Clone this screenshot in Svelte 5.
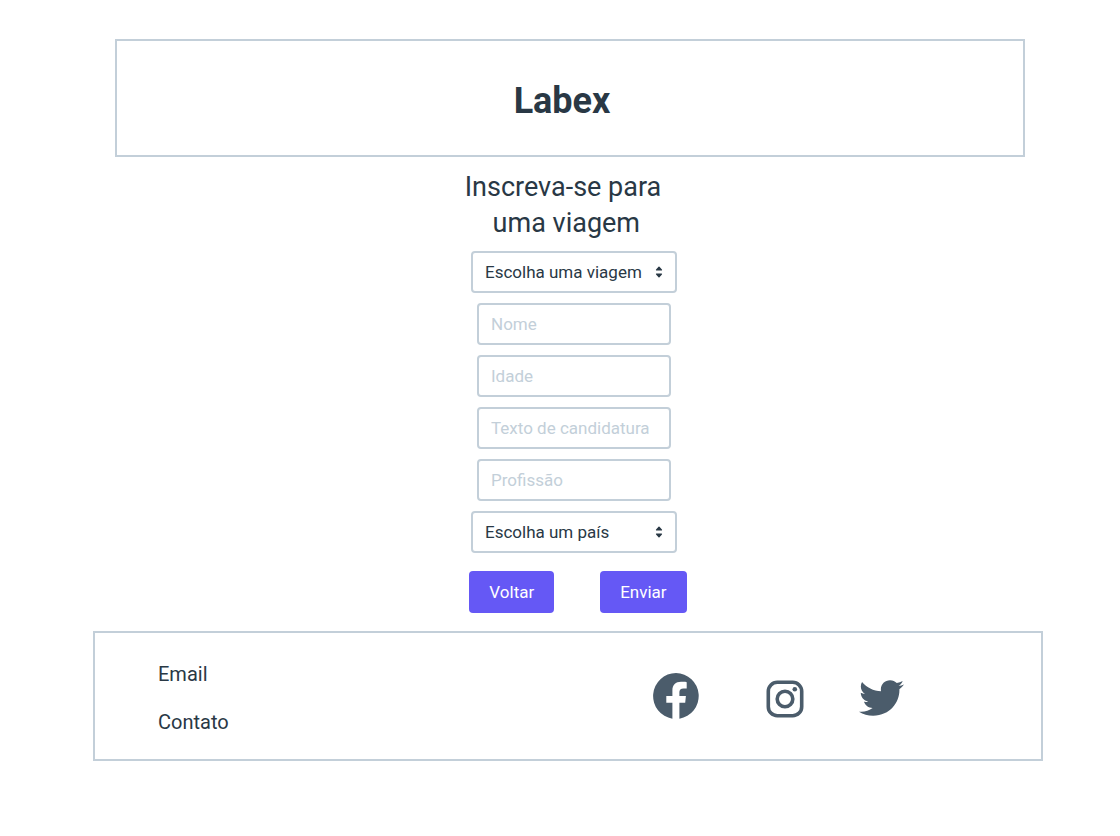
<script>
  const fields = [
    { name: 'nome', label: 'Nome' },
    { name: 'idade', label: 'Idade' },
    { name: 'candidatura', label: 'Texto de candidatura' },
    { name: 'profissao', label: 'Profissão' }
  ];
</script>

{#snippet choice(name, label)}
  <div class="choice">
    <select {name} aria-label={label}>
      <option value="">{label}</option>
    </select>
    <svg class="arrows" viewBox="0 0 8 12" aria-hidden="true">
      <path d="M1.5 4.5h5a.6.6 0 0 0 .45-1L4.5.8a.7.7 0 0 0-1 0L1.05 3.5a.6.6 0 0 0 .45 1zM1.5 7.5h5a.6.6 0 0 1 .45 1L4.5 11.2a.7.7 0 0 1-1 0L1.05 8.5a.6.6 0 0 1 .45-1z" />
    </svg>
  </div>
{/snippet}

<div class="page">
  <header>
    <h1>Labex</h1>
  </header>

  <main>
    <h2>Inscreva-se para<br />&nbsp;uma viagem</h2>
    <form onsubmit={(e) => e.preventDefault()}>
      {@render choice('viagem', 'Escolha uma viagem')}
      {#each fields as field}
        <input type="text" name={field.name} placeholder={field.label} aria-label={field.label} />
      {/each}
      {@render choice('pais', 'Escolha um país')}
      <div class="actions">
        <button type="button">Voltar</button>
        <button type="submit">Enviar</button>
      </div>
    </form>
  </main>

  <footer>
    <nav class="links">
      <a href="#email">Email</a>
      <a href="#contato">Contato</a>
    </nav>
    <div class="social">
      <a class="facebook" href="#facebook" aria-label="Facebook">
        <svg width="46" height="46" viewBox="0 0 46 46">
          <path d="M23 0a23 23 0 0 0-3.6 45.7V29.8h-6.1v-6.9h6.1v-5.4c0-5.6 3.3-8.7 8.6-8.7 2.6 0 5.7.4 5.7.4v6.3h-3.1c-3.1 0-4.2 1.5-4.2 3.6v3.8h6.5l-.7 6.9h-5.8v15.9A23 23 0 0 0 23 0z" />
        </svg>
      </a>
      <a class="instagram" href="#instagram" aria-label="Instagram">
        <svg width="38" height="38" viewBox="0 0 38 38">
          <rect class="line" x="2.3" y="2.3" width="33.4" height="33.4" rx="9" />
          <circle class="line" cx="19" cy="19" r="7.8" />
          <circle cx="28.8" cy="9.2" r="2.3" />
        </svg>
      </a>
      <a class="twitter" href="#twitter" aria-label="Twitter">
        <svg width="45" height="36" viewBox="0 2.1 24 19.8" preserveAspectRatio="none">
          <path d="M23.954 4.569c-.885.389-1.83.654-2.825.775 1.014-.611 1.794-1.574 2.163-2.723-.951.555-2.005.959-3.127 1.184-.896-.959-2.173-1.559-3.591-1.559-2.717 0-4.92 2.203-4.92 4.917 0 .39.045.765.127 1.124C7.691 8.094 4.066 6.13 1.64 3.161c-.427.722-.666 1.561-.666 2.475 0 1.71.87 3.213 2.188 4.096-.807-.026-1.566-.248-2.228-.616v.061c0 2.385 1.693 4.374 3.946 4.827-.413.111-.849.171-1.296.171-.314 0-.615-.03-.916-.086.631 1.953 2.445 3.377 4.604 3.417-1.68 1.319-3.809 2.105-6.102 2.105-.39 0-.779-.023-1.17-.067 2.189 1.394 4.768 2.209 7.557 2.209 9.054 0 13.999-7.496 13.999-13.986 0-.209 0-.42-.015-.63.961-.689 1.8-1.56 2.46-2.548l-.047-.02z" />
        </svg>
      </a>
    </div>
  </footer>
</div>

<style>
  :global(body) {
    background: #fff;
  }

  .page,
  .page * {
    box-sizing: border-box;
  }

  .page {
    padding: 39px 77px 40px 93px;
    font-family: Roboto, sans-serif;
    color: #293845;
  }

  header {
    display: flex;
    justify-content: center;
    margin: 0 18px 0 22px;
    padding: 40px 16px 34px 0;
    border: 2px solid #c3cfd9;
  }

  h1 {
    margin: 0;
    font-size: 36px;
    line-height: 40px;
    font-weight: 700;
  }

  main {
    display: flex;
    flex-direction: column;
    align-items: center;
    padding: 12px 0 18px;
  }

  h2 {
    margin: 0 10px 10px 0;
    font-size: 27px;
    line-height: 36px;
    font-weight: 400;
    text-align: center;
  }

  form {
    display: flex;
    flex-direction: column;
    align-items: center;
    gap: 10px;
    margin-left: 12px;
  }

  .choice {
    position: relative;
    width: 206px;
  }

  select,
  input {
    display: block;
    height: 42px;
    margin: 0;
    padding: 0 12px;
    border: 2px solid #c3cfd9;
    border-radius: 4px;
    background: #fff;
    color: #293845;
    font: 400 17px/24px Roboto, sans-serif;
  }

  select {
    width: 100%;
    appearance: none;
  }

  input {
    width: 194px;
  }

  input::placeholder {
    color: #c3cfd9;
    opacity: 1;
  }

  .arrows {
    position: absolute;
    top: 15px;
    right: 14px;
    width: 8px;
    height: 12px;
    fill: #293845;
    pointer-events: none;
  }

  .actions {
    display: flex;
    gap: 46px;
    margin: 8px 0 0 8px;
  }

  button {
    height: 42px;
    padding: 0 20px;
    border: 0;
    border-radius: 4px;
    background: #6558f5;
    color: #fff;
    font: 400 17px/24px Roboto, sans-serif;
  }

  footer {
    display: grid;
    grid-template-columns: 23fr 18fr;
    align-items: center;
    height: 130px;
    padding-left: 63px;
    border: 2px solid #c3cfd9;
  }

  .links {
    display: flex;
    flex-direction: column;
    align-items: flex-start;
    gap: 20px;
    padding-top: 4px;
  }

  .links a {
    color: inherit;
    font-size: 20px;
    line-height: 28px;
    text-decoration: none;
  }

  .social {
    display: flex;
    align-items: center;
  }

  .social svg {
    display: block;
    fill: #4b5c6b;
  }

  .social .line {
    fill: none;
    stroke: #4b5c6b;
    stroke-width: 3.6;
  }

  .instagram {
    margin: 6px 55px 0 67px;
  }

  .twitter {
    margin-top: 4px;
  }
</style>
